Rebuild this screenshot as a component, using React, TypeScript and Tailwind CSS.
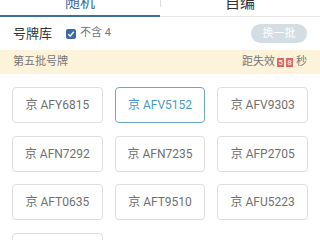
import React, { useState } from 'react';

const plates = [
  'AFY6815', 'AFV5152', 'AFV9303',
  'AFN7292', 'AFN7235', 'AFP2705',
  'AFT0635', 'AFT9510', 'AFU5223',
  'AFQ1187',
];

const font = { fontFamily: 'Roboto, "Noto Sans CJK SC", sans-serif' };

const App: React.FC = () => {
  const [tab, setTab] = useState<'random' | 'custom'>('random');
  const [selected, setSelected] = useState('AFV5152');
  const [noFour, setNoFour] = useState(true);

  return (
    <div className="w-[320px] h-[240px] overflow-hidden bg-white" style={font}>
      {/* tabs, scrolled partly out of view */}
      <div className="flex -mt-[10px] h-[27px]">
        <button
          onClick={() => setTab('random')}
          className={`flex-1 flex items-center justify-center text-[15px] leading-none ${tab === 'random' ? 'border-b-2 border-[#3d6c9f] text-[#3d6c9f]' : 'border-b border-[#e6e6e6] text-[#333]'}`}
        >
          随机
        </button>
        <button
          onClick={() => setTab('custom')}
          className={`relative flex-1 flex items-center justify-center text-[15px] leading-none ${tab === 'custom' ? 'border-b-2 border-[#3d6c9f] text-[#3d6c9f]' : 'border-b border-[#e6e6e6] text-[#333]'}`}
        >
          <span className="absolute left-0 top-[8px] h-[9px] w-px bg-[#dddddd]" />
          自编
        </button>
      </div>

      {/* header row */}
      <div className="flex items-center h-[33px] pl-[13px] pr-[13px]">
        <span className="text-[13px] text-[#333]">号牌库</span>
        <label className="flex items-center ml-[14px] cursor-pointer" onClick={() => setNoFour(!noFour)}>
          <span className={`w-[10px] h-[10px] rounded-[2px] flex items-center justify-center ${noFour ? 'bg-[#3a6aa8]' : 'border border-[#999]'}`}>
            {noFour && (
              <svg width="8" height="8" viewBox="0 0 8 8">
                <path d="M1.2 4.2 L3.2 6 L6.8 1.8" stroke="white" strokeWidth="1.4" fill="none" />
              </svg>
            )}
          </span>
          <span className="ml-[4px] text-[11px] text-[#777]">不含 4</span>
        </label>
        <button className="ml-auto w-[56px] h-[19px] rounded-full bg-[#d4dde3] text-white text-[11px] leading-none">
          换一批
        </button>
      </div>

      {/* batch banner */}
      <div className="flex items-center h-[24px] px-[13px] bg-[#fdf3da] text-[11px] text-[#777]">
        <span>第五批号牌</span>
        <span className="ml-auto flex items-center">
          距失效
          <span className="ml-[2px] w-[7px] h-[9px] bg-[#e06464] text-white text-[8px] leading-[9px] text-center">5</span>
          <span className="ml-[2px] w-[7px] h-[9px] bg-[#e06464] text-white text-[8px] leading-[9px] text-center">8</span>
          <span className="ml-[3px]">秒</span>
        </span>
      </div>

      {/* plate grid */}
      <div className="grid grid-cols-3 gap-x-3 gap-y-[12.5px] px-3 pt-[13px]">
        {plates.map((p) => (
          <button
            key={p}
            onClick={() => setSelected(p)}
            className={`h-[36px] rounded-[4px] border flex items-center justify-center text-[12px] ${selected === p ? 'border-[#6aa8c6] text-[#4a98c2]' : 'border-[#dedede] text-[#707070]'}`}
          >
            京 {p}
          </button>
        ))}
      </div>
    </div>
  );
};

export default App;
